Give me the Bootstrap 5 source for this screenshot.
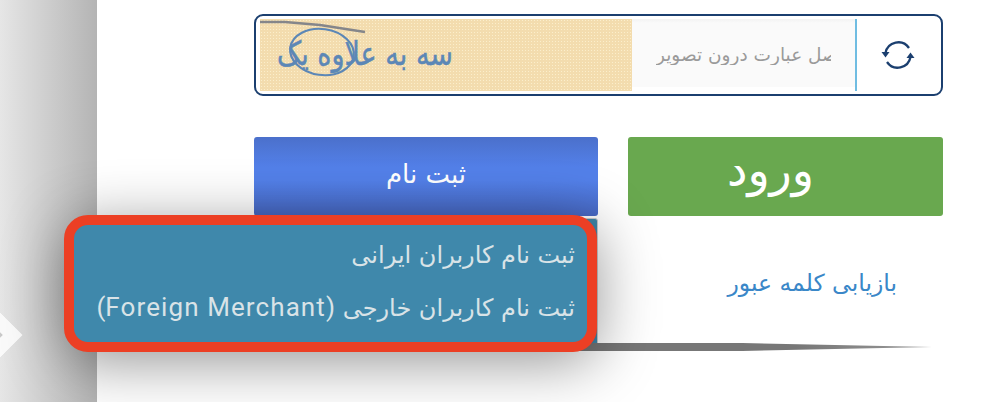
<!DOCTYPE html>
<html lang="fa">
<head>
<meta charset="utf-8">
<title>ورود</title>
<link href="https://cdn.jsdelivr.net/npm/bootstrap@5.3.0/dist/css/bootstrap.min.css" rel="stylesheet">
<style>
html,body{height:402px;overflow:hidden;background:#fff;font-family:Roboto,"DejaVu Sans",sans-serif}
.shell{height:402px}
.side-rail{width:97px;flex:none;background:linear-gradient(90deg,#e6e6e6,#b4b4b4);position:relative;overflow:hidden}
.rail-knob{position:absolute;left:-16px;top:319px;width:32px;height:32px;transform:rotate(45deg);background:#c9c9c9;border:14px solid #fafafa}
.login-pane{padding:14px 47px 0 157px;min-width:0}
.captcha-box{height:82px;border:2px solid #1b3f6f;border-radius:9px;padding:3px 3px 3px 4px;background:#fff}
.captcha-pic{width:372px;flex:none;background-color:#f3dcae;background-image:radial-gradient(#fbeecb 35%,transparent 40%);background-size:3px 3px}
.captcha-pic svg{display:block}
.captcha-word{font-family:"DejaVu Sans",sans-serif;font-size:33px;fill:#5c87b6;stroke:#5c87b6;stroke-width:.5}
.captcha-input{flex:1 1 0;width:0;min-width:0;border:0;border-right:2px solid #70bde2;background:linear-gradient(#f3f3f3,#fafafa 4px) no-repeat;background-size:100% 68px;padding:0 24px;outline:0;font-family:"DejaVu Sans",sans-serif;font-size:18.5px;direction:ltr;text-align:left}
.captcha-input::placeholder{color:#9a9a9a;opacity:1}
.refresh-btn{width:81px;flex:none;border:0;background:#fff;padding:0}
.action-row{margin-top:41px;height:79px}
.btn-login{width:315px;height:79px;background:#69a84f;border:0;border-radius:3px;color:#fff;font-family:"DejaVu Sans",sans-serif;font-size:46px;line-height:1;padding:0 30px 14px 0}
.btn-login:hover{background:#69a84f;color:#fff}
.btn-signup{width:344px;height:79px;background:linear-gradient(#4b70cb,#5380e9 38%,#5380e9 55%,#4869c4);border:0;border-radius:3px;color:#fff;font-family:"DejaVu Sans",sans-serif;font-size:26px;line-height:1;padding:0 0 6px}
.btn-signup:hover{color:#fff}
.menu-back{position:absolute;right:0;top:81px;width:300px;height:129px;background:#3f88ab;border:1px solid #ccc;border-radius:3px}
.dropdown-menu.callout{position:absolute;display:block;right:1px;left:auto;top:78px;width:533px;height:137px;margin:0;padding:8px 0;background:#3f88ab;border:10px solid #ec3f24;border-radius:24px;box-shadow:0 10px 60px rgba(0,0,0,.42);direction:rtl}
.callout .dropdown-item{height:52px;line-height:44px;padding:0 12px;color:#d9e3e7;font-size:24px;font-family:"DejaVu Sans",sans-serif;text-align:right}
.latin-name{font-family:Roboto,sans-serif;font-size:26px;letter-spacing:1.1px}
.recover-row{height:127px;padding-right:46px;padding-top:51px}
.recover-link{color:#3a87c8;font-family:"DejaVu Sans",sans-serif;font-size:23.5px;line-height:1.4;text-decoration:none}
.fade-rule{height:8px;margin:0 11px 0 0;border:0;opacity:1;background:linear-gradient(90deg,#777 80%,#999);clip-path:polygon(0 0,72% 0,100% 50%,72% 100%,0 100%)}
</style>
</head>
<body>
<div class="shell d-flex">
  <aside class="side-rail"><div class="rail-knob"></div></aside>
  <main class="login-pane flex-grow-1">
    <form>
      <div class="captcha-box d-flex">
        <div class="captcha-pic">
          <svg width="372" height="72" viewBox="0 0 372 72">
            <text class="captcha-word" x="193" y="46" text-anchor="start" direction="rtl" textLength="176" lengthAdjust="spacingAndGlyphs">سه به علاوه یک</text>
            <path d="M0 3 L25 3 L60 6 L105 13" fill="none" stroke="#85868a" stroke-width="2.5"/>
            <ellipse cx="62" cy="33" rx="32" ry="23" fill="none" stroke="#5c87b6" stroke-width="2.2" transform="rotate(8 62 33)"/>
          </svg>
        </div>
        <input class="captcha-input" type="text" placeholder="حاصل عبارت درون تصویر">
        <button class="refresh-btn d-flex align-items-center justify-content-center" type="button" aria-label="refresh">
          <svg width="34" height="34" viewBox="0 0 34 34" fill="none">
            <path d="M4.5 15A13 13 0 0 1 28 10" stroke="#1b3f6f" stroke-width="2.3"/>
            <path d="M29.5 19A13 13 0 0 1 6 24" stroke="#1b3f6f" stroke-width="2.3"/>
            <path d="M.5 14h8l-4 5.5z" fill="#1b3f6f"/>
            <path d="M25.5 20h8l-4-5.5z" fill="#1b3f6f"/>
          </svg>
        </button>
      </div>
      <div class="action-row d-flex justify-content-between">
        <div class="dropdown position-relative">
          <button class="btn btn-signup" type="button">ثبت نام</button>
          <div class="menu-back"></div>
          <ul class="dropdown-menu callout show list-unstyled">
            <li><a class="dropdown-item" href="#">ثبت نام کاربران ایرانی</a></li>
            <li><a class="dropdown-item" href="#">ثبت نام کاربران خارجی <span class="latin-name">(Foreign Merchant)</span></a></li>
          </ul>
        </div>
        <button class="btn btn-login" type="button">ورود</button>
      </div>
      <div class="recover-row text-end"><a class="recover-link" href="#">بازیابی کلمه عبور</a></div>
      <hr class="fade-rule">
    </form>
  </main>
</div>
</body>
</html>
